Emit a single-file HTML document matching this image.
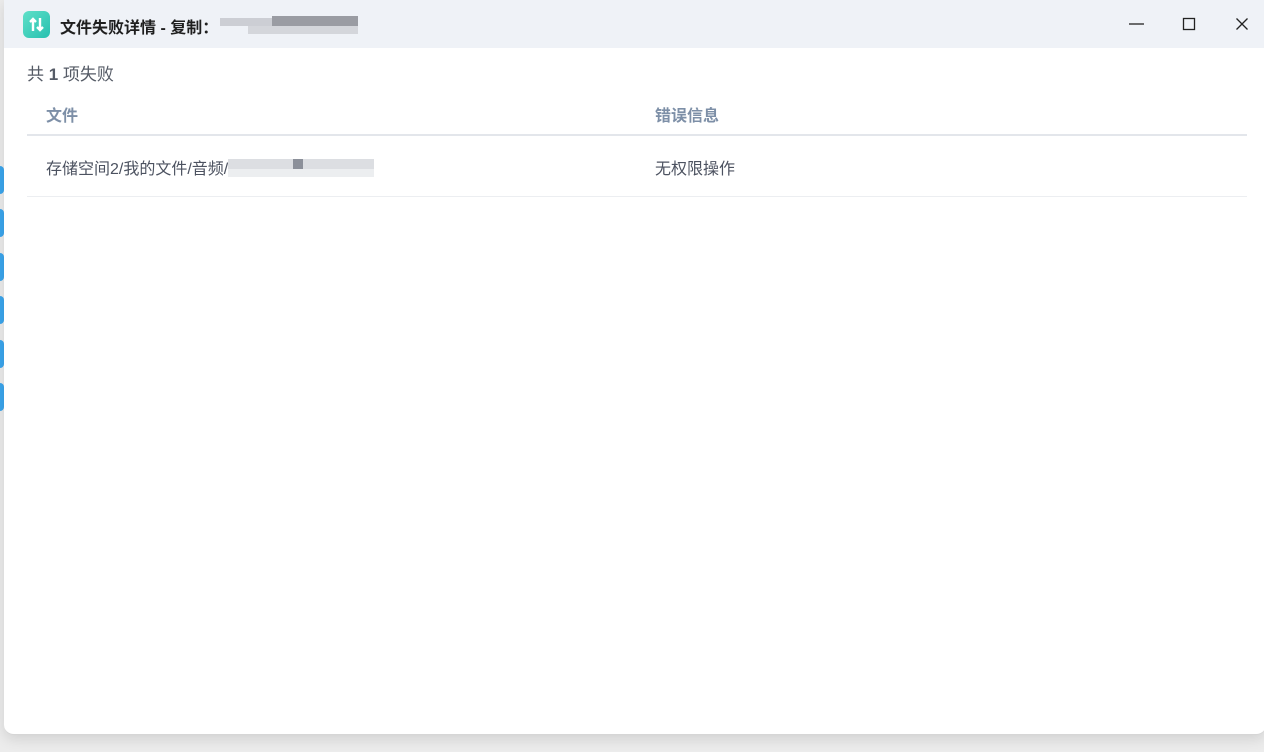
<!DOCTYPE html>
<html><head><meta charset="utf-8"><style>
*{margin:0;padding:0;box-sizing:border-box}
body{width:1264px;height:752px;background:#ececec;position:relative;overflow:hidden;font-family:"Liberation Sans","Noto Sans CJK SC",sans-serif}
.blob{position:absolute;left:-4px;width:8px;height:28px;border-radius:4px;background:#3ba6ee}
.win{position:absolute;left:4px;top:0;width:1262px;height:735px;background:#fff;border-radius:0 0 10px 10px;box-shadow:0 4px 14px rgba(0,0,0,.12);border-bottom:1px solid #d6d6d6;overflow:hidden}
.tb{height:48px;background:#eff2f7;position:relative}
.ic{position:absolute;left:19px;top:11px;width:27px;height:27px;border-radius:6px;background:linear-gradient(135deg,#5fe0c8,#27c0b0)}
.title{position:absolute;left:56px;top:14px;font-size:16px;font-weight:bold;color:#1f1f1f}
.pix{position:absolute;height:8px;background:#c9ccd3}
.ctrl{position:absolute;top:16px}
.cnt{position:absolute;left:23px;top:60px;font-size:17px;color:#555b66}
.hd{position:absolute;top:102px;font-size:16px;font-weight:bold;color:#7d8fa7}
.line{position:absolute;left:23px;width:1220px;height:1px}
.cell{position:absolute;top:155px;font-size:16px;color:#4c5260}
</style></head><body>
<div class="blob" style="top:166px"></div><div class="blob" style="top:209px"></div><div class="blob" style="top:253px"></div><div class="blob" style="top:296px"></div><div class="blob" style="top:340px"></div><div class="blob" style="top:383px"></div>
<div class="win">
<div class="tb">
<div class="ic"><svg width="27" height="27" viewBox="0 0 27 27"><path d="M10 20V8M7 11l3-3 3 3M17 7v12M14 16l3 3 3-3" stroke="#fff" stroke-width="2.4" fill="none"/></svg></div>
<div class="title">文件失败详情 - 复制：</div>
<div class="pix" style="left:216px;top:18px;width:60px;background:#ccced4"></div>
<div class="pix" style="left:244px;top:26px;width:110px;background:#d4d6db"></div>
<div class="pix" style="left:268px;top:16px;width:86px;height:10px;background:#9a9ca3"></div>
<svg class="ctrl" style="left:1125px" width="16" height="16"><path d="M0 8h15" stroke="#222" stroke-width="1.3"/></svg>
<svg class="ctrl" style="left:1178px" width="16" height="16"><rect x="1.5" y="2.5" width="11" height="11" fill="none" stroke="#222" stroke-width="1.3"/></svg>
<svg class="ctrl" style="left:1231px" width="16" height="16"><path d="M1.5 2.5l11 11M12.5 2.5l-11 11" stroke="#222" stroke-width="1.3"/></svg>
</div>
<div class="cnt">共 <b>1</b> 项失败</div>
<div class="hd" style="left:42px">文件</div>
<div class="hd" style="left:651px">错误信息</div>
<div class="line" style="top:134px;height:2px;background:#e3e6eb"></div>
<div class="cell" style="left:42px">存储空间2/我的文件/音频/</div>
<div class="pix" style="left:224px;top:159px;width:146px;height:10px;background:#dcdee2"></div>
<div class="pix" style="left:289px;top:159px;width:10px;height:10px;background:#8c909a"></div>
<div class="pix" style="left:224px;top:169px;width:146px;height:8px;background:#eceef0"></div>
<div class="cell" style="left:651px">无权限操作</div>
<div class="line" style="top:196px;background:#eceef1"></div>
</div>
</body></html>
